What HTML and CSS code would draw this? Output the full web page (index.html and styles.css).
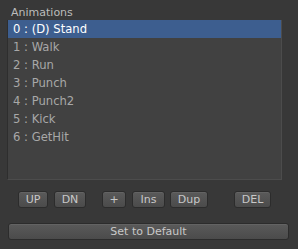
FILE: index.html
```html
<!DOCTYPE html>
<html lang="en">
<head>
    <meta charset="UTF-8">
    <title>Animations</title>
    <link rel="stylesheet" href="styles.css">
</head>
<body>
    <main class="panel">
        <div class="title">Animations</div>
        <ul class="anim-list">
            <li class="selected">0 : (D) Stand</li>
            <li>1 : Walk</li>
            <li>2 : Run</li>
            <li>3 : Punch</li>
            <li>4 : Punch2</li>
            <li>5 : Kick</li>
            <li>6 : GetHit</li>
        </ul>
        <div class="toolbar">
            <button class="btn btn-up">UP</button>
            <button class="btn btn-dn">DN</button>
            <button class="btn btn-add">+</button>
            <button class="btn btn-ins">Ins</button>
            <button class="btn btn-dup">Dup</button>
            <button class="btn btn-del">DEL</button>
        </div>
        <button class="btn btn-default">Set to Default</button>
    </main>
</body>
</html>
```

FILE: styles.css
```css
html, body {
    margin: 0;
    padding: 0;
    background-color: #383838;
}

.panel {
    width: 298px;
    height: 249px;
    padding: 6px 0 0 7px;
    box-sizing: border-box;
    font-family: "DejaVu Sans", sans-serif;
    font-size: 11px;
}

.title {
    height: 14px;
    line-height: 14px;
    padding-left: 4px;
    color: #bcbcbc;
}

.anim-list {
    list-style: none;
    margin: 0;
    padding: 0;
    width: 275px;
    height: 160px;
    background-color: #414141;
    border-right: 1px solid #4c4c4c;
    border-bottom: 1px solid #4c4c4c;
    border-left: 1px solid #2e2e2e;
    box-sizing: border-box;
}

.anim-list li {
    height: 18px;
    line-height: 19px;
    padding-left: 5px;
    font-size: 11.6px;
    color: #a8a8a8;
}

.anim-list li.selected {
    background-color: #3d5e8f;
    color: #ffffff;
}

.toolbar {
    display: flex;
    align-items: center;
    margin-top: 11px;
    padding-left: 11px;
}

.btn {
    height: 17px;
    padding: 0 6px;
    margin: 0;
    border: 1px solid #2c2c2c;
    border-radius: 3px;
    background: linear-gradient(#5a5a5a, #4b4b4b);
    box-shadow: inset 0 1px 0 #636363;
    color: #c8c8c8;
    font-family: "DejaVu Sans", sans-serif;
    font-size: 11px;
    line-height: 15px;
    box-sizing: border-box;
}

.btn-up { width: 30px; }
.btn-dn { width: 32px; margin-left: 6px; }
.btn-add { width: 24px; margin-left: 16px; }
.btn-ins { width: 33px; margin-left: 6px; }
.btn-dup { width: 38px; margin-left: 5px; }
.btn-del { width: 37px; margin-left: 26px; }

.btn-default {
    display: block;
    width: 281px;
    margin: 15px 0 0 1px;
}
```
